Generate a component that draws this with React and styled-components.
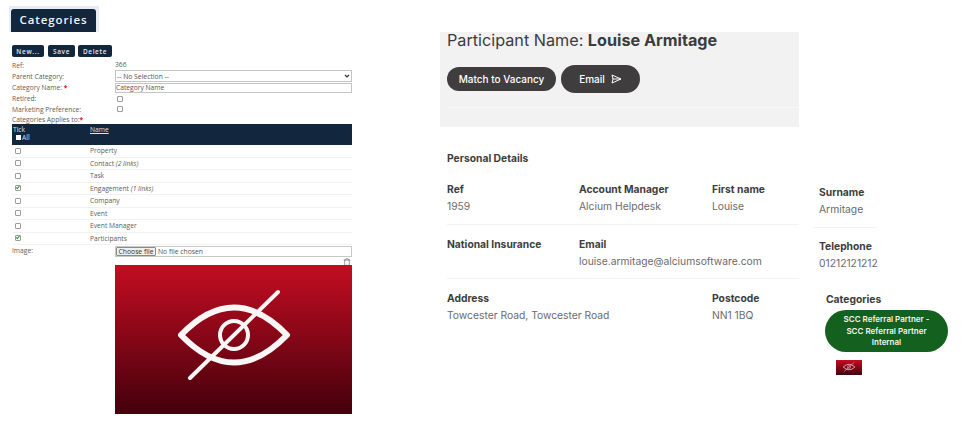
import React from "react";
import styled, { createGlobalStyle } from "styled-components";
import { Trash } from "lucide-react";

const GlobalStyle = createGlobalStyle`
  html, body {
    margin: 0;
    background: #fff;
  }
`;

const categoryTypes = [
  { name: "Property" },
  { name: "Contact", links: "(2 links)" },
  { name: "Task" },
  { name: "Engagement", links: "(1 links)", checked: true },
  { name: "Company" },
  { name: "Event" },
  { name: "Event Manager" },
  { name: "Participants", checked: true },
];

const EyeImage = ({ className }) => (
  <svg className={className} viewBox="0 0 237 149" preserveAspectRatio="none">
    <defs>
      <linearGradient id="redFade" x1="0" y1="0" x2="0" y2="1">
        <stop offset="0" stopColor="#c40d22" />
        <stop offset="1" stopColor="#43000b" />
      </linearGradient>
    </defs>
    <rect width="237" height="149" fill="url(#redFade)" />
    <g fill="none" stroke="#fbf6f6">
      <path d="M66 70 Q119 15 172 70 Q119 125 66 70 Z" strokeWidth="6" strokeLinejoin="round" />
      <circle cx="119" cy="70" r="14" strokeWidth="4" />
      <path d="M163 27 L75 113" strokeWidth="4" strokeLinecap="round" />
    </g>
  </svg>
);

const SendIcon = () => (
  <svg width="11" height="10" viewBox="0 0 11 10" fill="none" stroke="#fff" strokeWidth="1">
    <path d="M1 1 L10 5 L1 9 L2 5 Z" />
    <path d="M2 5 H10" />
  </svg>
);

export default function App() {
  return (
    <>
      <GlobalStyle />
      <Page>
        <Admin>
          <TabStrip>
            <Tab>Categories</Tab>
          </TabStrip>
          <Toolbar>
            <SmallButton $width={32}>New...</SmallButton>
            <SmallButton $width={27} $gap={4}>Save</SmallButton>
            <SmallButton $width={34} $gap={3}>Delete</SmallButton>
          </Toolbar>
          <FormRow $height={10}>
            <FormLabel>Ref:</FormLabel>
            <FormValue>366</FormValue>
          </FormRow>
          <FormRow $height={12}>
            <FormLabel>Parent Category:</FormLabel>
            <Select defaultValue="none">
              <option value="none">-- No Selection --</option>
            </Select>
          </FormRow>
          <FormRow $height={11}>
            <FormLabel>
              Category Name: <Required>*</Required>
            </FormLabel>
            <TextInput defaultValue="Category Name" />
          </FormRow>
          <FormRow $height={11}>
            <FormLabel>Retired:</FormLabel>
            <FormCheck type="checkbox" />
          </FormRow>
          <FormRow $height={10}>
            <FormLabel>Marketing Preference:</FormLabel>
            <FormCheck type="checkbox" />
          </FormRow>
          <FormRow $height={10}>
            <FormLabel>
              Categories Applies to:<Required>*</Required>
            </FormLabel>
          </FormRow>
          <TableHead>
            <HeadCell>
              Tick
              <AllLabel>
                <AllBox />
                All
              </AllLabel>
            </HeadCell>
            <HeadLink>Name</HeadLink>
          </TableHead>
          {categoryTypes.map((item) => (
            <TableRow key={item.name}>
              <Check type="checkbox" defaultChecked={item.checked} />
              <span>
                {item.name} {item.links && <em>{item.links}</em>}
              </span>
            </TableRow>
          ))}
          <FileRow>
            <FormLabel>Image:</FormLabel>
            <FilePicker>
              <FileButton>Choose file</FileButton>
              <span>No file chosen</span>
            </FilePicker>
          </FileRow>
          <TrashRow>
            <Trash size={8} strokeWidth={1.5} color="#444" />
          </TrashRow>
          <ImageRow>
            <LargeEye />
          </ImageRow>
        </Admin>

        <Profile>
          <HeaderPanel>
            <Title>
              Participant Name: <strong>Louise Armitage</strong>
            </Title>
            <Actions>
              <PillButton $width={109} $height={24}>Match to Vacancy</PillButton>
              <PillButton $width={79} $height={28}>
                Email <SendIcon />
              </PillButton>
            </Actions>
            <PanelRule />
          </HeaderPanel>
          <Details>
            <SectionTitle>Personal Details</SectionTitle>
            <DetailRow>
              <Field><FieldLabel>Ref</FieldLabel><FieldValue>1959</FieldValue></Field>
              <Field><FieldLabel>Account Manager</FieldLabel><FieldValue>Alcium Helpdesk</FieldValue></Field>
              <Field><FieldLabel>First name</FieldLabel><FieldValue>Louise</FieldValue></Field>
            </DetailRow>
            <DetailRow>
              <Field><FieldLabel>National Insurance</FieldLabel></Field>
              <Field $span={2}><FieldLabel>Email</FieldLabel><FieldValue>louise.armitage@alciumsoftware.com</FieldValue></Field>
            </DetailRow>
            <DetailRow $last>
              <Field $span={2}><FieldLabel>Address</FieldLabel><FieldValue>Towcester Road, Towcester Road</FieldValue></Field>
              <Field><FieldLabel>Postcode</FieldLabel><FieldValue>NN1 1BQ</FieldValue></Field>
            </DetailRow>
          </Details>
        </Profile>

        <Side>
          <SideField>
            <FieldLabel>Surname</FieldLabel>
            <FieldValue>Armitage</FieldValue>
          </SideField>
          <SideField $last>
            <FieldLabel>Telephone</FieldLabel>
            <FieldValue>01212121212</FieldValue>
          </SideField>
          <SideCategories>
            <FieldLabel>Categories</FieldLabel>
            <CategoryPill>SCC Referral Partner - SCC Referral Partner Internal</CategoryPill>
            <SmallEye />
          </SideCategories>
        </Side>
      </Page>
    </>
  );
}

const Page = styled.div`
  display: flex;
  align-items: flex-start;
  width: 967px;
  height: 436px;
  overflow: hidden;
  background: #fff;
`;

/* left: admin form */
const Admin = styled.div`
  box-sizing: border-box;
  width: 352px;
  flex: none;
  padding: 6px 0 0 12px;
  font-family: "Open Sans", "Liberation Sans", sans-serif;
  font-size: 6.7px;
  color: #5c5c5c;
`;
const TabStrip = styled.div`
  width: 90px;
  height: 26px;
  margin-left: -3px;
  padding: 3px 0 0 2px;
  box-sizing: border-box;
  background: #e8ecf4;
`;
const Tab = styled.div`
  width: 85px;
  height: 23px;
  line-height: 22px;
  text-align: center;
  border-radius: 3px 3px 0 0;
  background: #12263d;
  color: #f2f4f6;
  font-size: 11.5px;
  font-weight: 600;
  letter-spacing: 0.9px;
`;
const Toolbar = styled.div`
  display: flex;
  margin: 13px 0 3px;
`;
const SmallButton = styled.button`
  width: ${(p) => p.$width}px;
  height: 12px;
  margin-left: ${(p) => p.$gap || 0}px;
  padding: 0;
  border: 0;
  border-radius: 2px;
  background: #12263d;
  color: #e6e9ec;
  font: 600 6.4px "Open Sans", sans-serif;
  letter-spacing: 0.7px;
`;
const FormRow = styled.div`
  display: grid;
  grid-template-columns: 103px 1fr;
  height: ${(p) => p.$height}px;
  align-items: center;
`;
const FormLabel = styled.span`
  white-space: nowrap;
  line-height: 9px;
`;
const FormValue = styled.span`
  line-height: 10px;
`;
const Required = styled.span`
  color: #d4141c;
  font-weight: 700;
`;
const Select = styled.select`
  box-sizing: border-box;
  width: 237px;
  height: 12px;
  padding: 0 0 0 1px;
  border: 1px solid #c4c4c4;
  appearance: none;
  background: #fff url("data:image/svg+xml,%3Csvg xmlns='http://www.w3.org/2000/svg' width='6' height='4'%3E%3Cpath d='M1 1l2 2 2-2' fill='none' stroke='%23333' stroke-width='1.2'/%3E%3C/svg%3E") no-repeat right 1px center;
  color: #555;
  font: 6.8px "Open Sans", sans-serif;
`;
const TextInput = styled.input`
  box-sizing: border-box;
  width: 237px;
  height: 10px;
  padding: 0;
  border: 1px solid #c4c4c4;
  color: #555;
  font: 6.7px "Open Sans", sans-serif;
  outline: none;
`;
const Check = styled.input`
  appearance: none;
  position: relative;
  box-sizing: border-box;
  width: 6px;
  height: 6px;
  margin: 0;
  border: 1px solid #9c9c9c;
  border-radius: 1px;
  background: #fff;
  &:checked::after {
    content: "";
    position: absolute;
    left: 1px;
    top: -1px;
    width: 1px;
    height: 3px;
    border: solid #2c8a3c;
    border-width: 0 1px 1px 0;
    transform: rotate(40deg);
  }
`;
const FormCheck = styled(Check)`
  margin-left: 2px;
`;
const TableHead = styled.div`
  display: grid;
  grid-template-columns: 77px 1fr;
  box-sizing: border-box;
  height: 21px;
  padding: 2px 1px;
  background: #12263d;
  color: #dfe3e7;
  line-height: 7px;
`;
const HeadCell = styled.div``;
const AllLabel = styled.div`
  display: flex;
  align-items: center;
  gap: 1px;
  margin: 1px 0 0 3px;
`;
const AllBox = styled.span`
  width: 5px;
  height: 5px;
  background: #fff;
`;
const HeadLink = styled.span`
  text-decoration: underline;
`;
const TableRow = styled.div`
  box-sizing: border-box;
  display: grid;
  grid-template-columns: 75px 1fr;
  align-items: center;
  height: 12.5px;
  padding-left: 3px;
  border-bottom: 1px solid #f1f1f1;
  em {
    font-style: italic;
  }
`;
const FileRow = styled.div`
  display: grid;
  grid-template-columns: 103px 1fr;
  height: 12px;
  margin-top: 1px;
`;
const FilePicker = styled.div`
  display: flex;
  align-items: center;
  gap: 2px;
  box-sizing: border-box;
  width: 237px;
  height: 11px;
  border: 1px solid #c8c8c8;
  color: #555;
  font-size: 6.8px;
`;
const FileButton = styled.button`
  box-sizing: border-box;
  width: 40px;
  height: 9px;
  padding: 0;
  border: 1px solid #8a8a8a;
  border-radius: 1px;
  background: #efefef;
  color: #333;
  font: 6.8px/7px "Open Sans", sans-serif;
`;
const TrashRow = styled.div`
  display: flex;
  justify-content: flex-end;
  height: 7px;
  margin-right: 1px;
`;
const ImageRow = styled.div`
  padding-left: 103px;
`;
const LargeEye = styled(EyeImage)`
  display: block;
  width: 237px;
  height: 149px;
`;

/* middle: participant card */
const Profile = styled.div`
  width: 359px;
  flex: none;
  margin: 32px 0 0 88px;
  font-family: Inter, "Liberation Sans", sans-serif;
`;
const HeaderPanel = styled.div`
  box-sizing: border-box;
  height: 95px;
  padding: 0 0 0 7px;
  background: #f2f2f2;
`;
const Title = styled.h1`
  margin: 0;
  height: 33px;
  line-height: 17px;
  font-size: 16.2px;
  font-weight: 400;
  color: #3c3c3c;
  strong {
    font-weight: 700;
  }
`;
const Actions = styled.div`
  display: flex;
  align-items: center;
  gap: 5px;
`;
const PillButton = styled.button`
  display: flex;
  align-items: center;
  justify-content: center;
  gap: 6px;
  width: ${(p) => p.$width}px;
  height: ${(p) => p.$height}px;
  padding: 0;
  border: 0;
  border-radius: 14px;
  background: #3f3d3e;
  color: #fff;
  font: 500 10px Inter, sans-serif;
`;
const PanelRule = styled.div`
  height: 1px;
  margin-top: 14px;
  background: #f8f8f8;
`;
const Details = styled.div`
  padding: 25px 0 0 7px;
`;
const SectionTitle = styled.div`
  height: 18px;
  font-size: 10.3px;
  font-weight: 700;
  line-height: 12px;
  color: #3d3d3d;
`;
const DetailRow = styled.div`
  display: grid;
  grid-template-columns: 132px 133px 1fr;
  height: 54.5px;
  box-sizing: border-box;
  border-bottom: ${(p) => (p.$last ? "0" : "1px solid #f3f3f3")};
`;
const Field = styled.div`
  grid-column: span ${(p) => p.$span || 1};
  padding-top: 13px;
`;
const FieldLabel = styled.div`
  height: 17px;
  font-size: 10.3px;
  font-weight: 700;
  line-height: 12px;
  color: #3d3d3d;
  white-space: nowrap;
`;
const FieldValue = styled.div`
  font-size: 10.3px;
  line-height: 12px;
  color: #6b6b6b;
  white-space: nowrap;
`;

/* right: overflowing side column */
const Side = styled.div`
  box-sizing: border-box;
  width: 140px;
  flex: none;
  margin-left: 14px;
  padding-top: 186px;
  font-family: Inter, "Liberation Sans", sans-serif;
`;
const SideField = styled.div`
  width: 64px;
  height: ${(p) => (p.$last ? 65 : 42)}px;
  box-sizing: border-box;
  padding: ${(p) => (p.$last ? 12 : 0)}px 0 0 6px;
  border-bottom: ${(p) => (p.$last ? "0" : "1px solid #f3f3f3")};
`;
const SideCategories = styled.div`
  margin-left: 13px;
`;
const CategoryPill = styled.div`
  box-sizing: border-box;
  width: 123px;
  height: 42px;
  margin-left: -1px;
  padding: 4px 14px 0;
  border-radius: 21px;
  background: #14601f;
  color: #f2f5f2;
  font-size: 8px;
  font-weight: 600;
  line-height: 11.5px;
  text-align: center;
`;
const SmallEye = styled(EyeImage)`
  display: block;
  width: 26px;
  height: 15px;
  margin: 8px 0 0 10px;
`;
